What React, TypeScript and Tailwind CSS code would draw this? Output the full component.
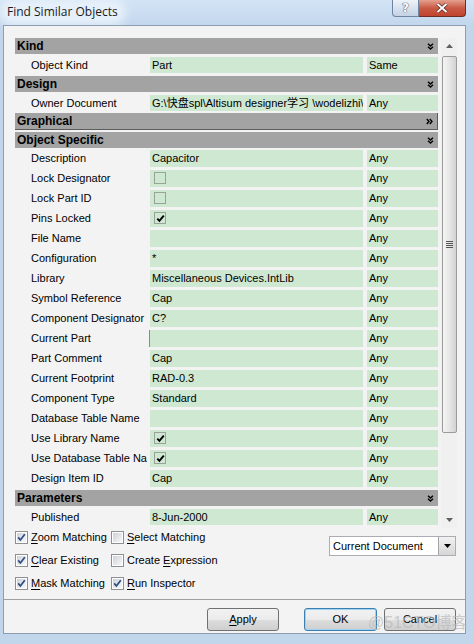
import React from "react";

type Item =
  | { kind: "head"; label: string; h: string; band: string; collapsed?: boolean }
  | {
      kind: "row";
      label: string;
      value?: string;
      check?: boolean;
      any: string;
      h: string;
      cell: string;
      marker?: boolean;
    };

const R = "h-[20px]";
const C = "h-[17px]";

const items: Item[] = [
  { kind: "head", label: "Kind", h: "h-[19px]", band: "h-[16px]" },
  { kind: "row", label: "Object Kind", value: "Part", any: "Same", h: "h-[19px]", cell: "h-[16px]" },
  { kind: "head", label: "Design", h: "h-[19px]", band: "h-[16px]" },
  {
    kind: "row",
    label: "Owner Document",
    value: "G:\\快盘spl\\Altisum designer学习 \\wodelizhi\\",
    any: "Any",
    h: "h-[18px]",
    cell: "h-[16px]",
  },
  { kind: "head", label: "Graphical", h: "h-[19px]", band: "h-[17px]", collapsed: true },
  { kind: "head", label: "Object Specific", h: "h-[18px]", band: "h-[16px]" },
  { kind: "row", label: "Description", value: "Capacitor", any: "Any", h: R, cell: C },
  { kind: "row", label: "Lock Designator", check: false, any: "Any", h: R, cell: C },
  { kind: "row", label: "Lock Part ID", check: false, any: "Any", h: R, cell: C },
  { kind: "row", label: "Pins Locked", check: true, any: "Any", h: R, cell: C },
  { kind: "row", label: "File Name", value: "", any: "Any", h: R, cell: C },
  { kind: "row", label: "Configuration", value: "*", any: "Any", h: R, cell: C },
  { kind: "row", label: "Library", value: "Miscellaneous Devices.IntLib", any: "Any", h: R, cell: C },
  { kind: "row", label: "Symbol Reference", value: "Cap", any: "Any", h: R, cell: C },
  { kind: "row", label: "Component Designator", value: "C?", any: "Any", h: R, cell: C },
  { kind: "row", label: "Current Part", value: "", any: "Any", h: R, cell: C, marker: true },
  { kind: "row", label: "Part Comment", value: "Cap", any: "Any", h: R, cell: C },
  { kind: "row", label: "Current Footprint", value: "RAD-0.3", any: "Any", h: R, cell: C },
  { kind: "row", label: "Component Type", value: "Standard", any: "Any", h: R, cell: C },
  { kind: "row", label: "Database Table Name", value: "", any: "Any", h: R, cell: C },
  { kind: "row", label: "Use Library Name", check: true, any: "Any", h: R, cell: C },
  { kind: "row", label: "Use Database Table Name", check: true, any: "Any", h: R, cell: C },
  { kind: "row", label: "Design Item ID", value: "Cap", any: "Any", h: R, cell: C },
  { kind: "head", label: "Parameters", h: "h-[19px]", band: "h-[16px]" },
  { kind: "row", label: "Published", value: "8-Jun-2000", any: "Any", h: "h-[19px]", cell: "h-[16px]" },
];

function Chevrons({ right }: { right?: boolean }) {
  return (
    <svg width="7" height="7" viewBox="0 0 7 7" className={right ? "-rotate-90" : ""}>
      <path d="M1 0.8 L3.5 3 L6 0.8 M1 3.8 L3.5 6 L6 3.8" fill="none" stroke="#000" strokeWidth="1.4" />
    </svg>
  );
}

function GridCheck({ checked }: { checked: boolean }) {
  return (
    <span className="mt-[2px] ml-[2px] flex h-[12px] w-[12px] items-center justify-center border border-[#9aa39b]">
      {checked && (
        <svg width="9" height="9" viewBox="0 0 9 9">
          <path d="M1.3 4.6 L3.4 6.8 L7.8 1.6" fill="none" stroke="#000" strokeWidth="1.9" />
        </svg>
      )}
    </span>
  );
}

function WinCheck({ checked }: { checked: boolean }) {
  return (
    <span className="h-[13px] w-[13px] shrink-0 border border-[#8e8f8f] bg-white p-[1px]">
      <span className="flex h-full w-full items-center justify-center bg-gradient-to-br from-[#cdd1d7] to-[#f8f8f8]">
        {checked && (
          <svg width="9" height="9" viewBox="0 0 9 9">
            <path d="M1.2 4.4 L3.4 7 L7.8 1.2" fill="none" stroke="#2b4a86" strokeWidth="1.7" />
          </svg>
        )}
      </span>
    </span>
  );
}

function Option({ checked, pre, u, post, w }: { checked: boolean; pre?: string; u: string; post: string; w: string }) {
  return (
    <div className={`flex items-center gap-[3px] ${w}`}>
      <WinCheck checked={checked} />
      <span className="whitespace-nowrap">
        {pre}
        <span className="underline underline-offset-2">{u}</span>
        {post}
      </span>
    </div>
  );
}

function Scrollbar() {
  return (
    <div className="flex h-[490px] w-[16px] flex-col items-center bg-[#f0f0f0]">
      <div className="flex h-[16px] w-full items-center justify-center">
        <svg width="7" height="4" viewBox="0 0 7 4">
          <path d="M0 4 L3.5 0 L7 4 Z" fill="#606060" />
        </svg>
      </div>
      <div className="mt-[2px] flex h-[377px] w-[15px] items-center justify-center rounded-[2px] border border-[#9b9b9b] bg-gradient-to-r from-[#f4f4f4] via-[#e6e6e6] to-[#d2d2d2]">
        <div className="flex flex-col gap-[1px]">
          <span className="block h-px w-[7px] bg-[#555]" />
          <span className="block h-px w-[7px] bg-[#555]" />
          <span className="block h-px w-[7px] bg-[#555]" />
          <span className="block h-px w-[7px] bg-[#555]" />
        </div>
      </div>
      <div className="flex-1" />
      <div className="flex h-[16px] w-full items-center justify-center">
        <svg width="7" height="4" viewBox="0 0 7 4">
          <path d="M0 0 L3.5 4 L7 0 Z" fill="#606060" />
        </svg>
      </div>
    </div>
  );
}

function Button({ children, w, primary }: { children: React.ReactNode; w: string; primary?: boolean }) {
  return (
    <div
      className={`flex h-[23px] ${w} items-center justify-center rounded-[3px] border ${
        primary ? "border-[#3c7fb1] shadow-[inset_0_0_0_1px_#9fd3f3]" : "border-[#707070]"
      } bg-[linear-gradient(#f2f2f2_0%,#ebebeb_50%,#dddddd_51%,#cfcfcf_100%)] text-[#000]`}
    >
      {children}
    </div>
  );
}

export default function App() {
  return (
    <div className="relative flex h-[644px] w-[474px] flex-col overflow-hidden bg-[#c1d5eb] font-['Liberation_Sans','Noto_Sans_CJK_SC',sans-serif] text-[11px] text-black">
      {/* title bar */}
      <div className="flex h-[25px] items-start bg-gradient-to-b from-[#d3e4f5] to-[#c3d7ed]">
        <div className="mt-[4px] ml-[5px] rounded-full bg-[#e6f0fa] px-[2px] font-['Open_Sans',sans-serif] text-[12px] leading-[16px] text-[#1b1b1b] shadow-[0_0_10px_6px_#e6f0fa]">
          Find Similar Objects
        </div>
        <div className="ml-auto mr-[8px] flex">
          <div className="flex h-[17px] w-[27px] items-center justify-center rounded-bl-[4px] border border-t-0 border-[#6f84a0] bg-gradient-to-b from-[#eef3f9] to-[#c3d2e4] font-['DejaVu_Sans',sans-serif] text-[12px] font-bold text-white [text-shadow:0_0_1px_#334,0_0_1px_#334]">
            ?
          </div>
          <div className="flex h-[17px] w-[47px] items-center justify-center rounded-br-[4px] border border-t-0 border-l-0 border-[#6e2c24] bg-gradient-to-b from-[#e3a08f] via-[#c95a45] to-[#c0432e]">
            <svg width="12" height="10" viewBox="0 0 12 10">
              <path d="M1.5 1 L10.5 9 M10.5 1 L1.5 9" stroke="#4a1a14" strokeWidth="3.2" />
              <path d="M1.5 1 L10.5 9 M10.5 1 L1.5 9" stroke="#fff" strokeWidth="2" />
            </svg>
          </div>
        </div>
      </div>

      {/* client area */}
      <div className="mb-[10px] ml-[3px] mr-[8px] flex flex-1 flex-col border border-[#8d9db1] bg-[#f3f3f3]">
        <div className="h-[574px] border-b border-[#a0a0a0] pl-[11px] pt-[12px]">
          <div className="flex gap-[3px]">
            <div className="w-[423px]">
              {items.map((it) =>
                it.kind === "head" ? (
                  <div key={it.label} className={it.h}>
                    <div
                      className={`flex ${it.band} items-center justify-between bg-[#a3a3a3] pl-[2px] pr-[4px] text-[12px] font-bold ${
                        it.collapsed ? "border-b border-r border-[#5c5c5c]" : ""
                      }`}
                    >
                      <span>{it.label}</span>
                      <Chevrons right={it.collapsed} />
                    </div>
                  </div>
                ) : (
                  <div key={it.label} className={`${it.h} flex`}>
                    <div
                      className={`${it.cell} w-[135px] pl-[16px] leading-[17px] ${
                        it.marker ? "border-r border-[#8a8a8a]" : ""
                      }`}
                    >
                      <div className="w-[116px] overflow-hidden whitespace-nowrap">{it.label}</div>
                    </div>
                    <div className={`${it.cell} w-[213px] overflow-hidden whitespace-nowrap bg-[#cfe8d2] pl-[2px] leading-[17px]`}>
                      {it.check !== undefined ? <GridCheck checked={it.check} /> : it.value}
                    </div>
                    <div className={`${it.cell} ml-[4px] w-[71px] bg-[#cfe8d2] pl-[2px] leading-[17px]`}>{it.any}</div>
                  </div>
                )
              )}
            </div>
            <Scrollbar />
          </div>

          {/* options */}
          <div className="mt-[1px] flex">
            <div className="flex flex-col">
              <div className="flex h-[23px] items-start">
                <Option checked w="w-[96px]" u="Z" post="oom Matching" />
                <Option checked={false} u="S" post="elect Matching" w="" />
              </div>
              <div className="flex h-[23px] items-start">
                <Option checked w="w-[96px]" u="C" post="lear Existing" />
                <Option checked={false} pre="Create " u="E" post="xpression" w="" />
              </div>
              <div className="flex h-[23px] items-start">
                <Option checked w="w-[96px]" u="M" post="ask Matching" />
                <Option checked u="R" post="un Inspector" w="" />
              </div>
            </div>
            <div className="ml-auto mr-[9px] mt-[7px] flex h-[20px] w-[127px] items-center border border-[#abadb3] bg-white">
              <span className="flex-1 pl-[3px]">Current Document</span>
              <div className="flex h-[18px] w-[17px] items-center justify-center border-l border-[#a4a4a4] bg-gradient-to-b from-[#f2f2f2] to-[#d6d6d6]">
                <svg width="7" height="4" viewBox="0 0 7 4">
                  <path d="M0 0 L3.5 4 L7 0 Z" fill="#000" />
                </svg>
              </div>
            </div>
          </div>
        </div>

        {/* buttons */}
        <div className="flex flex-1 items-start justify-end pr-[9px] pt-[8px]">
          <Button w="w-[72px] mr-[25px]">
            <span>
              <span className="underline underline-offset-2">A</span>pply
            </span>
          </Button>
          <Button w="w-[73px] mr-[7px]" primary>
            OK
          </Button>
          <Button w="w-[72px]">Cancel</Button>
        </div>
      </div>

      {/* watermark */}
      <div className="pointer-events-none absolute left-[368px] top-[611px] text-[16px] text-[#b8b8b8]/70">
        @51CTO博客
      </div>
    </div>
  );
}
